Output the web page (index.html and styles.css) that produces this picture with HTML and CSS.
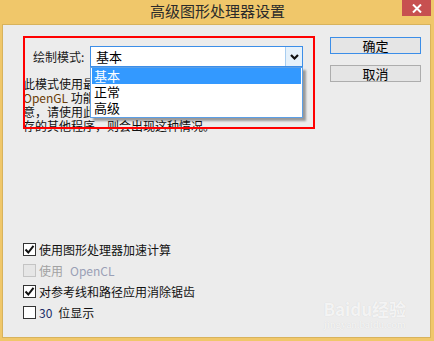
FILE: index.html
```html
<!DOCTYPE html>
<html>
<head>
    <link rel="stylesheet" href="styles.css">
</head>
<body>
    <div class="window">
        <div class="titlebar">
            <span></span>
            <div class="title">高级图形处理器设置</div>
            <div class="close-btn">
                <svg width="10" height="9" viewBox="0 0 10 9"><path d="M1 0.5 L9 8.5 M9 0.5 L1 8.5" stroke="#fff" stroke-width="2"/></svg>
            </div>
        </div>

        <div class="client">
            <div class="settings">
                <div class="mode-row">
                    <span class="mode-label">绘制模式:</span>
                    <div class="combo">
                        <span class="combo-value">基本</span>
                        <span class="combo-btn">
                            <svg width="9" height="6" viewBox="0 0 9 6"><path d="M1 1 L4.5 4.5 L8 1" stroke="#111" stroke-width="2.2" fill="none"/></svg>
                        </span>
                        <ul class="combo-list">
                            <li class="selected">基本</li>
                            <li>正常</li>
                            <li>高级</li>
                        </ul>
                    </div>
                </div>

                <div class="mode-desc">
                    <div>此模式使用最少的 GPU 显存，并启用最基本的</div>
                    <div><span class="latin">OpenGL</span> 功能。如果您遇到与显卡相关的问题或注</div>
                    <div>意，请使用此模式。如果您在运行占用 GPU 显</div>
                    <div>存的其他程序，则会出现这种情况。</div>
                </div>

                <div class="options">
                    <label class="option">
                        <span class="check checked"><svg width="11" height="11" viewBox="0 0 11 11"><path d="M1.5 5.5 L4.3 8.5 L9.5 1.8" stroke="#111" stroke-width="2" fill="none"/></svg></span>
                        使用图形处理器加速计算
                    </label>
                    <label class="option disabled">
                        <span class="check"></span>
                        使用 <span class="cl">OpenCL</span>
                    </label>
                    <label class="option">
                        <span class="check checked"><svg width="11" height="11" viewBox="0 0 11 11"><path d="M1.5 5.5 L4.3 8.5 L9.5 1.8" stroke="#111" stroke-width="2" fill="none"/></svg></span>
                        对参考线和路径应用消除锯齿
                    </label>
                    <label class="option">
                        <span class="check"></span>
                        <span class="num">30</span> 位显示
                    </label>
                </div>
            </div>

            <div class="actions">
                <div class="btn default">确定</div>
                <div class="btn">取消</div>
            </div>

            <!-- annotation frame -->
            <div class="highlight"></div>

            <div class="watermark">
                <div class="wm-logo">Baidu经验</div>
                <div class="wm-url">jingyan.baidu.com</div>
            </div>
        </div>
    </div>
</body>
</html>
```

FILE: styles.css
```css
body {
    margin: 0;
    font-family: "Noto Sans CJK SC", "Liberation Sans", sans-serif;
    font-size: 12px;
    color: #000;
}

.window {
    width: 434px;
    height: 341px;
    box-sizing: border-box;
    background: #f0c76a;
    padding: 0 3px 3px 2px;
    display: flex;
    flex-direction: column;
}

.titlebar {
    height: 24px;
    display: grid;
    grid-template-columns: 1fr auto 1fr;
    align-items: start;
}

.title {
    font-size: 15px;
    line-height: 22px;
    color: #2b2b2b;
    padding-left: 2px;
}

.close-btn {
    justify-self: end;
    width: 29px;
    height: 16px;
    background: #c75050;
    display: flex;
    align-items: center;
    justify-content: center;
}

.client {
    flex: 1;
    position: relative;
    display: flex;
    background: #ececec;
    border: 1px solid #d8b35c;
    padding: 0 9px 0 20px;
}

.settings {
    flex: 1;
}

.mode-row {
    display: flex;
    align-items: center;
    margin-top: 21px;
    padding-left: 10px;
}

.mode-label {
    width: 52px;
    margin-right: 5px;
    color: #1a1a1a;
}

.combo {
    position: relative;
    width: 213px;
    height: 21px;
    box-sizing: border-box;
    border: 1px solid #3c8ee8;
    background: #fff;
    display: flex;
}

.combo-value {
    flex: 1;
    padding-left: 5px;
    line-height: 19px;
    font-size: 13px;
}

.combo-btn {
    width: 16px;
    background: #e5f1fb;
    border-left: 1px solid #a8cdf0;
    display: flex;
    align-items: center;
    justify-content: center;
}

.combo-list {
    position: absolute;
    top: 20px;
    left: -1px;
    width: 213px;
    box-sizing: border-box;
    margin: 0;
    padding: 0 1px 1px;
    list-style: none;
    background: #fff;
    border: 1px solid #5c9fe6;
    box-shadow: 3px 3px 2px rgba(0, 0, 0, 0.35);
    z-index: 2;
}

.combo-list li {
    height: 16px;
    line-height: 16px;
    padding-left: 2px;
    font-size: 13px;
}

.combo-list li.selected {
    background: #3399ff;
    color: #fff;
}

.mode-desc {
    margin-top: 10px;
    line-height: 14px;
    white-space: nowrap;
    width: 270px;
    overflow: hidden;
    color: #111;
}

.latin {
    color: #6a3c08;
}

.options {
    margin-top: 106px;
}

.option {
    display: flex;
    align-items: center;
    height: 21px;
    gap: 3px;
    color: #111;
}

.check {
    width: 13px;
    height: 13px;
    box-sizing: border-box;
    border: 1px solid #333;
    background: #fff;
    display: flex;
    align-items: center;
    justify-content: center;
}

.option.disabled {
    color: #a2a2a2;
}

.option.disabled .check {
    border-color: #c4c4c4;
    background: #e6e6e6;
}

.cl {
    color: #9aa0b6;
    margin-left: 4px;
}

.num {
    color: #1b2c66;
    margin-right: 3px;
}

.actions {
    width: 91px;
    padding-top: 12px;
    display: flex;
    flex-direction: column;
    gap: 11px;
}

.btn {
    height: 17px;
    box-sizing: border-box;
    border: 1px solid #adadad;
    background: #e5e5e5;
    text-align: center;
    line-height: 15px;
    font-size: 13px;
}

.btn.default {
    border-color: #3c8ee8;
}

.highlight {
    position: absolute;
    left: 20px;
    top: 11px;
    width: 292px;
    height: 93px;
    box-sizing: border-box;
    border: 2px solid #ff0000;
    pointer-events: none;
    z-index: 3;
}

.watermark {
    position: absolute;
    right: 24px;
    bottom: 7px;
    text-align: center;
    color: rgba(255, 255, 255, 0.75);
    text-shadow: 0 0 1px rgba(0, 0, 0, 0.12);
}

.wm-logo {
    font-size: 17px;
    font-weight: bold;
    line-height: 18px;
}

.wm-url {
    font-family: "Liberation Serif", serif;
    font-size: 11px;
    line-height: 12px;
}
```
